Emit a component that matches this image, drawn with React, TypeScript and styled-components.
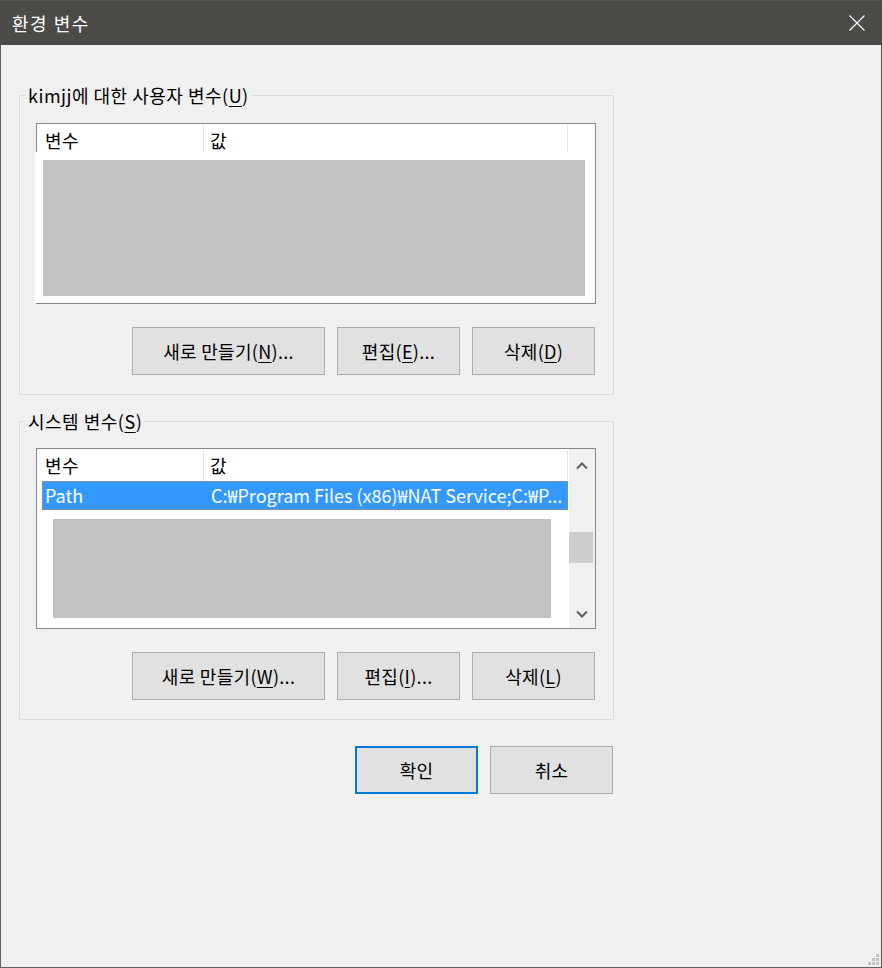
import React from "react";
import styled, { createGlobalStyle } from "styled-components";

const GlobalStyle = createGlobalStyle`
  html, body { margin: 0; padding: 0; background: #f0f0f0; }
  body {
    font-family: "Noto Sans CJK KR", "Noto Sans", sans-serif;
    font-size: 18px;
    color: #000;
  }
  * { box-sizing: border-box; }
`;

const Window = styled.div`
  position: relative;
  width: 882px;
  height: 968px;
  display: flex;
  flex-direction: column;
  background: #f0f0f0;
`;

const TitleBar = styled.div`
  height: 45px;
  flex: none;
  background: #4d4b48;
  border-top: 1px solid #5a5856;
  display: flex;
  align-items: center;
  justify-content: space-between;
  padding: 0 17px 0 12px;
`;

const Title = styled.span`
  color: #ffffff;
  font-size: 18px;
  line-height: 24px;
  letter-spacing: 1.5px;
`;

const Client = styled.div`
  flex: 1;
  border: 1px solid #5f5f5f;
  border-top: none;
  padding: 38px 0 0 18px;
`;

const Group = styled.fieldset<{ $mt?: number }>`
  width: 595px;
  margin: ${(p) => p.$mt ?? 0}px 0 0 0;
  padding: 0;
  border: 1px solid #dcdcdc;
  min-inline-size: 0;
`;

const Legend = styled.legend`
  margin-left: 6px;
  padding: 0 2px;
  font-size: 18px;
  line-height: 24px;
  letter-spacing: 0.5px;
`;

const GroupBody = styled.div<{ $pt: number }>`
  padding: ${(p) => p.$pt}px 17px 19px 16px;
`;

const Mn = styled.span`
  text-decoration: underline;
  text-decoration-thickness: 1px;
  text-underline-offset: 3px;
`;

const ListBox = styled.div`
  width: 560px;
  height: 181px;
  border: 1px solid #828790;
  background: #ffffff;
  display: flex;
`;

const ListMain = styled.div`
  flex: 1;
  display: flex;
  flex-direction: column;
  min-width: 0;
`;

const Header = styled.div<{ $h: number }>`
  height: ${(p) => p.$h}px;
  flex: none;
  display: flex;
  align-items: stretch;
  padding-top: 1px;
`;

const HeaderCell = styled.div<{ $w: number; $pl: number }>`
  width: ${(p) => p.$w}px;
  flex: none;
  padding-left: ${(p) => p.$pl}px;
  padding-top: 3px;
  border-right: 1px solid #e5e5e5;
  line-height: 24px;
  font-size: 18px;
  letter-spacing: 0.5px;
`;

const CoverBody = styled.div`
  margin-left: -2px;
  height: 151px;
  background: #ffffff;
  padding: 8px 0 0 8px;
`;

const Redacted = styled.div<{ $w: number; $h: number }>`
  width: ${(p) => p.$w}px;
  height: ${(p) => p.$h}px;
  background: #c3c3c3;
`;

const SelectedRow = styled.div`
  margin-left: 5px;
  width: 526px;
  height: 29px;
  background: #3399ff;
  border: 1px dotted #c8844a;
  color: #ffffff;
  display: flex;
  line-height: 27px;
  font-size: 18px;
  white-space: nowrap;
`;

const RowCell = styled.div<{ $w?: number }>`
  ${(p) => (p.$w ? `width: ${p.$w}px; flex: none;` : "flex: 1; min-width: 0;")}
  padding-left: 2px;
  overflow: hidden;
`;

const RowBody = styled.div`
  padding: 9px 0 0 16px;
`;

const ScrollBar = styled.div`
  width: 26px;
  flex: none;
  background: #f0f0f0;
  display: flex;
  flex-direction: column;
`;

const ScrollArrow = styled.div<{ $h: number }>`
  height: ${(p) => p.$h}px;
  flex: none;
  display: flex;
  align-items: center;
  justify-content: center;
`;

const Track = styled.div`
  flex: 1;
  display: flex;
  flex-direction: column;
`;

const Thumb = styled.div<{ $top: number }>`
  margin-top: ${(p) => p.$top}px;
  width: 24px;
  height: 31px;
  background: #cdcdcd;
`;

const ButtonRow = styled.div<{ $mt: number }>`
  display: flex;
  justify-content: flex-end;
  gap: 12px;
  margin-top: ${(p) => p.$mt}px;
  padding-right: 1px;
`;

const DialogRow = styled(ButtonRow)`
  width: 595px;
`;

const Button = styled.button<{ $w: number; $default?: boolean }>`
  width: ${(p) => p.$w}px;
  height: 48px;
  padding: 0;
  margin: 0;
  background: #e1e1e1;
  border: ${(p) => (p.$default ? "2px solid #0078d7" : "1px solid #adadad")};
  font-family: "Noto Sans CJK KR", "Noto Sans", sans-serif;
  font-size: 18px;
  line-height: 24px;
  letter-spacing: 0.3px;
  color: #000;
  display: flex;
  align-items: center;
  justify-content: center;
`;

const Grip = styled.svg`
  position: absolute;
  right: 3px;
  bottom: 3px;
`;

const Chevron = ({ up }: { up?: boolean }) => (
  <svg width="12" height="9" viewBox="0 0 12 9">
    <polyline
      points={up ? "1,7.5 6,2.5 11,7.5" : "1,1.5 6,6.5 11,1.5"}
      fill="none"
      stroke="#606060"
      strokeWidth="2"
    />
  </svg>
);

export default function App() {
  return (
    <>
      <GlobalStyle />
      <Window>
        <TitleBar>
          <Title>환경 변수</Title>
          <svg width="16" height="16" viewBox="0 0 16 16">
            <path d="M0.5 0.5 L15.5 15.5 M15.5 0.5 L0.5 15.5" stroke="#ffffff" strokeWidth="1.2" />
          </svg>
        </TitleBar>
        <Client>
          <Group>
            <Legend>
              kimjj에 대한 사용자 변수(<Mn>U</Mn>)
            </Legend>
            <GroupBody $pt={16}>
              <ListBox>
                <ListMain>
                  <Header $h={28}>
                    <HeaderCell $w={167} $pl={8}>변수</HeaderCell>
                    <HeaderCell $w={364} $pl={6}>값</HeaderCell>
                  </Header>
                  <CoverBody>
                    <Redacted $w={542} $h={136} />
                  </CoverBody>
                </ListMain>
              </ListBox>
              <ButtonRow $mt={23}>
                <Button $w={193}>
                  새로 만들기(<Mn>N</Mn>)...
                </Button>
                <Button $w={123}>
                  편집(<Mn>E</Mn>)...
                </Button>
                <Button $w={123}>
                  삭제(<Mn>D</Mn>)
                </Button>
              </ButtonRow>
            </GroupBody>
          </Group>

          <Group $mt={14}>
            <Legend>
              시스템 변수(<Mn>S</Mn>)
            </Legend>
            <GroupBody $pt={15}>
              <ListBox>
                <ListMain>
                  <Header $h={32}>
                    <HeaderCell $w={167} $pl={8}>변수</HeaderCell>
                    <HeaderCell $w={364} $pl={6}>값</HeaderCell>
                  </Header>
                  <SelectedRow>
                    <RowCell $w={166}>Path</RowCell>
                    <RowCell>C:₩Program Files (x86)₩NAT Service;C:₩P...</RowCell>
                  </SelectedRow>
                  <RowBody>
                    <Redacted $w={498} $h={99} />
                  </RowBody>
                </ListMain>
                <ScrollBar>
                  <ScrollArrow $h={32}>
                    <Chevron up />
                  </ScrollArrow>
                  <Track>
                    <Thumb $top={51} />
                  </Track>
                  <ScrollArrow $h={28}>
                    <Chevron />
                  </ScrollArrow>
                </ScrollBar>
              </ListBox>
              <ButtonRow $mt={23}>
                <Button $w={193}>
                  새로 만들기(<Mn>W</Mn>)...
                </Button>
                <Button $w={123}>
                  편집(<Mn>I</Mn>)...
                </Button>
                <Button $w={123}>
                  삭제(<Mn>L</Mn>)
                </Button>
              </ButtonRow>
            </GroupBody>
          </Group>

          <DialogRow $mt={26}>
            <Button $w={123} $default>
              확인
            </Button>
            <Button $w={123}>취소</Button>
          </DialogRow>
        </Client>
        <Grip width="11" height="11" viewBox="0 0 11 11">
          <rect x="8" y="0" width="3" height="3" fill="#c2c2c2" />
          <rect x="4" y="4" width="3" height="3" fill="#c2c2c2" />
          <rect x="8" y="4" width="3" height="3" fill="#c2c2c2" />
          <rect x="0" y="8" width="3" height="3" fill="#c2c2c2" />
          <rect x="4" y="8" width="3" height="3" fill="#c2c2c2" />
          <rect x="8" y="8" width="3" height="3" fill="#c2c2c2" />
        </Grip>
      </Window>
    </>
  );
}
